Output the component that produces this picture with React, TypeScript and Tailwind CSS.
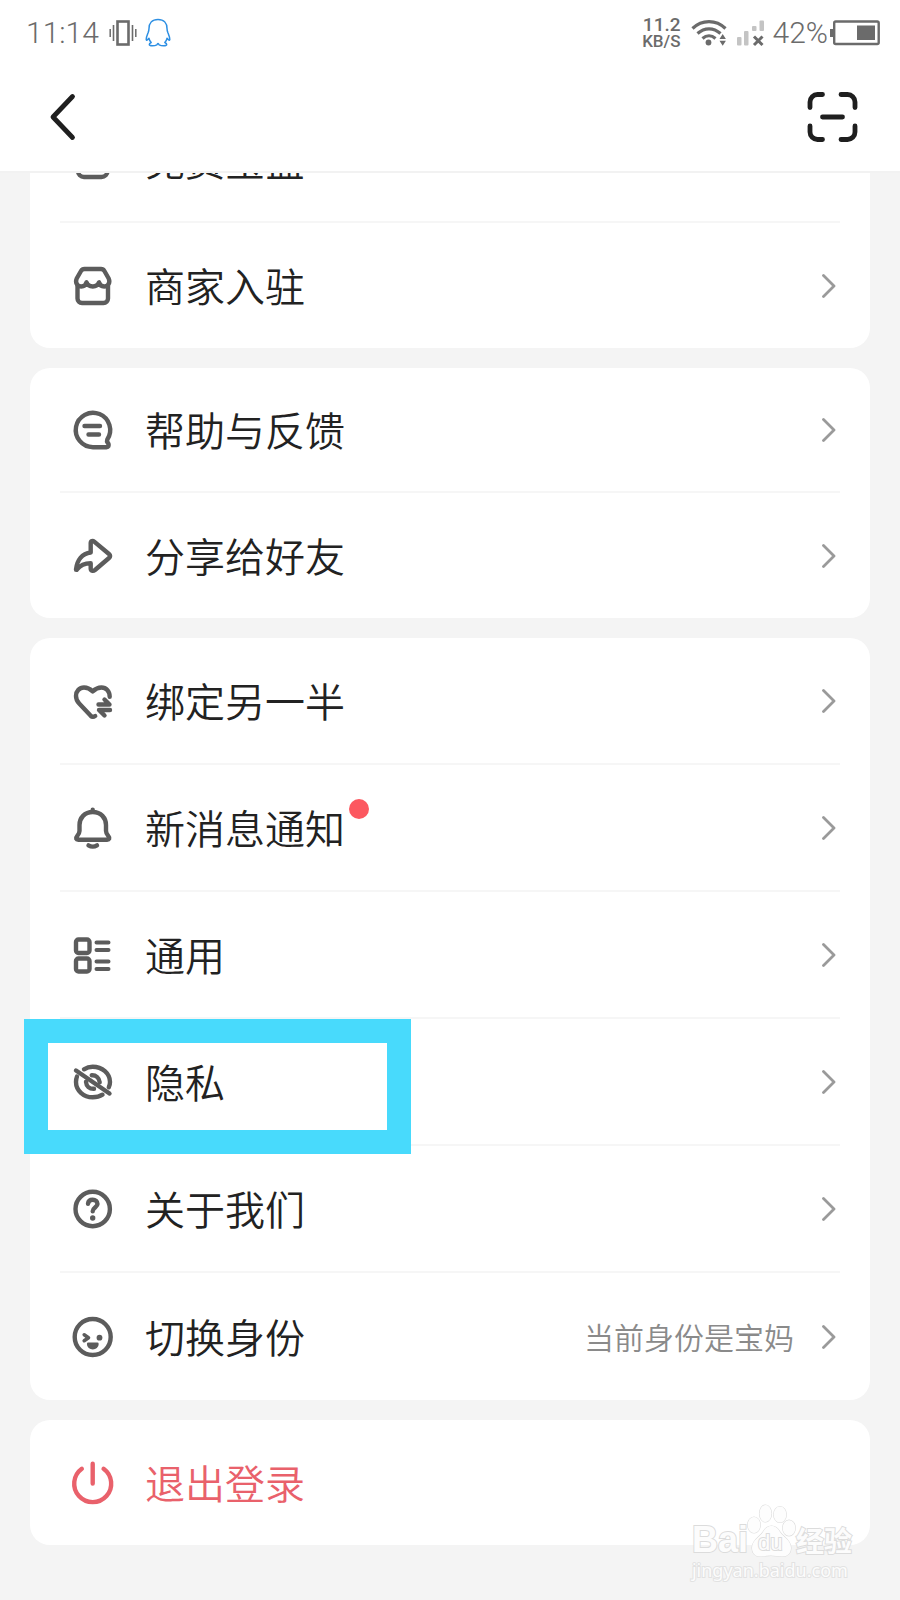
import type { ReactNode } from 'react'

type Item = {
  id: string
  label: string
  icon: ReactNode
  note?: string
  dot?: boolean
  highlight?: boolean
}

const Icon = ({ children }: { children: ReactNode }) => (
  <svg
    viewBox="0 0 40 40"
    className="w-10 h-10 shrink-0 overflow-visible"
    fill="none"
    stroke="currentColor"
    strokeWidth="4.4"
    strokeLinecap="round"
    strokeLinejoin="round"
    aria-hidden="true"
  >
    {children}
  </svg>
)

const BoxIcon = () => (
  <Icon>
    <rect x="5" y="4" width="29.5" height="33" rx="6" />
  </Icon>
)

const ShopIcon = () => (
  <Icon>
    <path d="M4.5 20V32.5a4.5 4.5 0 0 0 4.5 4.5h21.500a4.500 4.500 0 0 0 4.500-4.500V20" />
    <path d="M11.500 3h16.500a4 4 0 0 1 3.400 2l4.300 7.500c1.900 4.500-1 8-4.500 8-2.700 0-4.600-1.500-5.200-4.200-1 2.700-3.200 4.200-6.200 4.200s-5.300-1.500-6.300-4.200c-.7 2.700-2.600 4.200-5.200 4.200-3.600 0-6.500-3.500-4.600-8L8 5a4 4 0 0 1 3.500-2z" />
  </Icon>
)

const FeedbackIcon = () => (
  <Icon>
    <path d="M34.300 29.500A17.200 17.200 0 1 0 20 37.200H33.500c2 0 2.600-1.500 2-3.200l-1.500-2.500.3-2z" />
    <path d="M11.500 16h15.500M15.500 24.500h10.500" />
  </Icon>
)

const ShareIcon = () => (
  <Icon>
    <path d="M3 33.500C4 24.500 9 17.500 17.700 16.500V7c0-2.200 2-2.700 3.500-1.400L36 18c1.500 1.300 1.500 2.700 0 4L22 34c-2 1.600-4.300.8-4.300-1.500v-5.300C11.500 27.200 7 29.500 4 33.500c-.5.600-1 .5-1 0z" />
  </Icon>
)

const HeartIcon = () => (
  <Icon>
    <path d="M36.700 15.700C36.700 10 33 6.500 28.500 6.500c-3.300 0-6.200 1.400-8.800 4-2.600-2.600-5.500-4-8.700-4C6.500 6.500 3 10 3 15c0 3 1 5.200 3.200 7.500L17.500 34.600c1.400 1.400 3 1.500 4.700.4" />
    <path d="M25.500 23.500H36.500L31.500 18.500M37 29H26l5.500 5.500" />
  </Icon>
)

const BellIcon = () => (
  <Icon>
    <path d="M19.700 1.800v1.500M19.700 4C11.500 4 6.500 10 6.500 17v6c0 2-.8 3.200-2.400 5.200-1.800 2-1 3.500 1.200 3.500h28.800c2.200 0 3-1.500 1.300-3.500-1.600-2-2.400-3.200-2.400-5.200v-6c0-7-5-13-13.300-13z" />
    <path d="M15.500 37.300c2.600 1.600 5.900 1.600 8.500 0" />
  </Icon>
)

const GeneralIcon = () => (
  <Icon>
    <rect x="3" y="4.500" width="13.500" height="13.500" rx="2.500" />
    <rect x="3" y="23.500" width="13.500" height="13" rx="2.500" />
    <path d="M23.500 7.500h12M23.500 15h12M23.500 26.500h12M23.500 34h12" strokeWidth="4" />
  </Icon>
)

const PrivacyIcon = () => (
  <Icon>
    <path d="M11 7.300C13.600 5.600 16.500 4.700 19.700 4.700c9.500 0 17.300 6.900 17.300 15.300 0 2-.4 3.700-1.200 5.300" />
    <path d="M4 14.500C3.300 16.200 3 18 3 20c0 8.400 7.500 15.300 16.700 15.300 4 0 7.300-1 9.800-2.600" />
    <path d="M18.700 13.200c4.300-.2 7.500 2.800 8 7M13 19.800c.3 4.300 3.500 7.200 8 7" />
    <path d="M3 8.500L36.500 31.500" />
  </Icon>
)

const AboutIcon = () => (
  <Icon>
    <circle cx="19.700" cy="20" r="17.200" />
    <path d="M15 14.800c.3-2.500 2.200-4 4.700-4 2.800 0 4.800 1.800 4.800 4.200 0 3-4.800 3.500-4.800 7.300" />
    <circle cx="19.700" cy="29" r="2.700" fill="currentColor" stroke="none" />
  </Icon>
)

const FaceIcon = () => (
  <Icon>
    <circle cx="19.700" cy="20" r="18" />
    <path d="M11.200 17.800l4.300 2.900-4.300 3" strokeWidth="3.600" />
    <circle cx="26.500" cy="20.700" r="2.900" fill="currentColor" stroke="none" />
    <path d="M15.300 27h9c0 2.500-2 4-4.500 4s-4.500-1.500-4.500-4z" fill="currentColor" strokeWidth="2.800" />
  </Icon>
)

const PowerIcon = () => (
  <Icon>
    <path d="M8.800 5.700a18.500 18.500 0 1 0 21.800 0M19.700.8v19.800" />
  </Icon>
)

const Chevron = () => (
  <svg viewBox="0 0 14 26" className="w-3.5 h-6.5 shrink-0 text-[#9a9a9a]" fill="none" stroke="currentColor" strokeWidth="2.800" strokeLinecap="round" strokeLinejoin="round" aria-hidden="true">
    <path d="M1.500 2.500L12 13 1.500 23.500" />
  </svg>
)

const groups: { id: string; rowHeight: string; items: Item[] }[] = [
  {
    id: 'shop',
    rowHeight: 'h-[125px]',
    items: [
      { id: 'free', label: '免费宝盒', icon: <BoxIcon /> },
      { id: 'merchant', label: '商家入驻', icon: <ShopIcon /> },
    ],
  },
  {
    id: 'support',
    rowHeight: 'h-[125px]',
    items: [
      { id: 'feedback', label: '帮助与反馈', icon: <FeedbackIcon /> },
      { id: 'share', label: '分享给好友', icon: <ShareIcon /> },
    ],
  },
  {
    id: 'settings',
    rowHeight: 'h-[127px]',
    items: [
      { id: 'partner', label: '绑定另一半', icon: <HeartIcon /> },
      { id: 'notice', label: '新消息通知', icon: <BellIcon />, dot: true },
      { id: 'general', label: '通用', icon: <GeneralIcon /> },
      { id: 'privacy', label: '隐私', icon: <PrivacyIcon />, highlight: true },
      { id: 'about', label: '关于我们', icon: <AboutIcon /> },
      { id: 'identity', label: '切换身份', icon: <FaceIcon />, note: '当前身份是宝妈' },
    ],
  },
]

const StatusBar = () => (
  <div className="flex items-center justify-between h-16 pt-px pl-[26px] pr-5 font-[Roboto,sans-serif] text-[#6b6b6b]">
    <div className="flex items-center">
      <span className="text-[30px] leading-none font-light">11:14</span>

      {/* Vibrate */}
      <svg viewBox="0 0 28 26" className="w-7 h-[26px] ml-2.5" fill="none" stroke="currentColor" aria-hidden="true">
        <rect x="8.500" y="1.500" width="11" height="23" strokeWidth="2.600" />
        <path d="M1.200 9v8M26.800 9v8" strokeWidth="1.500" />
        <path d="M4.500 5v16M23.500 5v16" strokeWidth="1.600" />
      </svg>

      {/* QQ */}
      <svg viewBox="0 0 26 30" className="w-[26px] h-[30px] ml-2 text-[#2d8fe3]" fill="none" stroke="currentColor" strokeWidth="1.500" strokeLinejoin="round" aria-hidden="true">
        <path d="M13 1.500C7 1.500 4 5.500 4 10.500c0 1.700-.3 2.600-1 4.500-1 2.500-2 4.700-1.800 6.500.2 1.200 1.200.8 2.800-1.200.3 1.700 1 3 2.200 4.200-1.200.5-2 1.200-1.900 2.200.2 1.400 5 1.600 7.500.1.500-.4.700-1.300 1.200-1.300s.7.900 1.200 1.300c2.500 1.500 7.300 1.300 7.500-.1.100-1-.7-1.700-1.900-2.200 1.200-1.200 1.900-2.500 2.200-4.200 1.600 2 2.600 2.400 2.800 1.200.2-1.800-.8-4-1.800-6.500-.7-1.900-1-2.800-1-4.500 0-5-3-9-9-9z" />
      </svg>
    </div>

    <div className="flex items-center">
      <div className="flex flex-col items-end font-medium leading-[17px]">
        <span className="text-[19px]">11.2</span>
        <span className="text-[17px]">KB/S</span>
      </div>

      {/* Wi-Fi */}
      <svg viewBox="0 0 36 28" className="w-9 h-7 ml-2.5" fill="none" stroke="currentColor" strokeWidth="3.200" aria-hidden="true">
        <path d="M1.500 9.500C11 .3 25 .3 34.500 9.500M6.500 14.500c7-6.300 16-6.300 23 0M11.500 19.500c4-3.500 9-3.500 13 0" />
        <circle cx="17.500" cy="23.500" r="2.900" fill="currentColor" stroke="none" />
        <path d="M28.500 20l3.200-5 3.200 5zM28.500 21.800h6.400l-3.200 5z" fill="currentColor" stroke="none" />
      </svg>

      {/* Mobile signal */}
      <svg viewBox="0 0 28 28" className="w-7 h-7 ml-2.5" aria-hidden="true">
        <g fill="#c4c4c4">
          <rect x="0" y="18" width="4.500" height="8.500" rx="1" />
          <rect x="7" y="12" width="4.500" height="14.500" rx="1" />
          <rect x="15" y="7" width="4.500" height="5" rx="1" />
          <rect x="22.500" y="1.500" width="4.500" height="10.500" rx="1" />
        </g>
        <path d="M17 17.500l8.500 8.500M25.500 17.500L17 26" stroke="#6b6b6b" strokeWidth="3" />
      </svg>

      <span className="ml-2 text-[30px] leading-none font-light">42%</span>

      {/* Battery */}
      <svg viewBox="0 0 50 26" className="w-[50px] h-[26px] ml-0.5" aria-hidden="true">
        <rect x="4.200" y="1.500" width="44.500" height="22.500" rx="1.500" fill="none" stroke="currentColor" strokeWidth="2.400" />
        <path d="M0 9h4v8H0zM27 5.500h18V20H27z" fill="currentColor" />
      </svg>
    </div>
  </div>
)

const Row = ({ item, rowHeight, last }: { item: Item; rowHeight: string; last: boolean }) => (
  <li className={`relative ${rowHeight} ${last ? '' : 'border-b-2 border-[#f6f6f6]'}`}>
    <a href={`#${item.id}`} className="flex items-center h-full pl-[13px] pr-1">
      <span className="text-[#5c5c5c]">{item.icon}</span>
      <span className="relative ml-8 pb-0.5 text-[40px] leading-none font-[350] text-[#222]">
        {item.label}
        {item.dot && <span className="absolute -right-6 -top-2 w-5 h-5 rounded-full bg-[#fc5860]" />}
      </span>
      <span className="ml-auto mr-7 pb-0.5 text-[30px] leading-none font-[350] text-[#8a8a8a]">{item.note}</span>
      <Chevron />
    </a>
    {item.highlight && (
      <div className="absolute z-10 -left-9 top-0 w-[387px] h-[135px] border-24 border-[#48dafc] pointer-events-none" />
    )}
  </li>
)

const Watermark = () => (
  <div className="absolute right-12 bottom-[18px] flex flex-col font-bold text-[#fcfcfc] [paint-order:stroke_fill] pointer-events-none">
    <div className="flex items-end leading-none [-webkit-text-stroke:2px_#dcdcdc]">
      <span className="font-['Liberation_Sans',sans-serif] text-[36px]">Bai</span>
      <div className="relative w-12 h-14">
        <svg viewBox="0 0 48 56" className="w-12 h-14 overflow-visible" fill="#fdfdfd" stroke="#dcdcdc" strokeWidth="1.200" aria-hidden="true">
          <ellipse cx="6" cy="23" rx="6.300" ry="8" />
          <ellipse cx="17.500" cy="11.500" rx="6" ry="8.500" />
          <ellipse cx="32" cy="12.500" rx="6.300" ry="8" />
          <ellipse cx="41" cy="26" rx="6.300" ry="7.800" />
          <path d="M23.500 24c-4 0-6.500 2.500-8.500 6-2.500 4.500-11 8-11 16 0 5 3.500 8.500 8 8.500 3.500 0 7-1 11-1s7.500 1 11 1c5.500 0 9-3.500 9-8.500 0-8-8.500-11.500-11-16-2-3.500-4.500-6-8.500-6z" />
        </svg>
        <span className="absolute left-2.5 bottom-1 font-['Liberation_Sans',sans-serif] text-[22px] font-normal">du</span>
      </div>
      <span className="pb-1 text-[28px]">经验</span>
    </div>
    <span className="font-['Noto_Sans',sans-serif] text-[18px] leading-6 font-normal [-webkit-text-stroke:2px_#e2e2e2]">jingyan.baidu.com</span>
  </div>
)

const App = () => {
  return (
    <div className="relative min-h-screen overflow-hidden bg-[#f4f4f4] font-['Noto_Sans_CJK_SC',sans-serif]">

      {/* Header */}
      <header className="relative z-20 bg-white border-b-2 border-[#f2f2f2]">
        <StatusBar />
        <nav className="flex items-center justify-between h-[107px] pb-px pl-12 pr-10">
          <button aria-label="返回" className="text-[#1f1f1f]">
            <svg viewBox="0 0 30 48" className="w-[30px] h-12" fill="none" stroke="currentColor" strokeWidth="4.800" strokeLinecap="round" strokeLinejoin="round">
              <path d="M24.500 3.500L5 24 24.500 44.500" />
            </svg>
          </button>
          <button aria-label="扫一扫" className="text-[#1f1f1f]">
            <svg viewBox="0 0 54 54" className="w-[54px] h-[54px]" fill="none" stroke="currentColor" strokeWidth="4.800" strokeLinecap="round">
              <path d="M4 17.500v-5.500a7.500 7.500 0 0 1 7.500-7.500h5M35 4.500h6.500a7.500 7.500 0 0 1 7.500 7.500v5.500M49 36v6a7.500 7.500 0 0 1-7.500 7.500H35M16.500 49.500h-5A7.500 7.500 0 0 1 4 42v-6M16.500 27h20" />
            </svg>
          </button>
        </nav>
      </header>

      {/* Settings list, scrolled under the header */}
      <main className="-mt-[75px] px-[30px] pb-10 space-y-5">
        {groups.map((group) => (
          <ul key={group.id} className="px-[30px] bg-white rounded-[20px]">
            {group.items.map((item, i) => (
              <Row key={item.id} item={item} rowHeight={group.rowHeight} last={i === group.items.length - 1} />
            ))}
          </ul>
        ))}

        <button className="flex items-center w-full h-[125px] pl-[43px] bg-white rounded-[20px] text-[#e9616b]">
          <PowerIcon />
          <span className="ml-8 pb-0.5 text-[40px] leading-none font-[350]">退出登录</span>
        </button>
      </main>

      <Watermark />
    </div>
  )
}

export default App
